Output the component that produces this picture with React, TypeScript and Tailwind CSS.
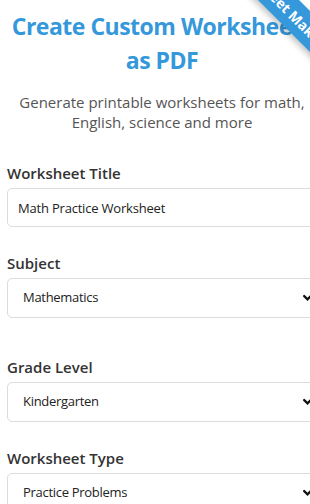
import React from "react";

const font = { fontFamily: '"Open Sans", "Noto Sans", sans-serif' };

function Chevron() {
  return (
    <svg
      className="pointer-events-none absolute left-[296px] top-1/2 -translate-y-1/2"
      width="9"
      height="7"
      viewBox="0 0 9 7"
      fill="none"
    >
      <path d="M1.2 1.6 L4.5 4.9 L7.8 1.6" stroke="#111" strokeWidth="2.2" strokeLinecap="square" />
    </svg>
  );
}

function SelectField({ value, options }: { value: string; options: string[] }) {
  return (
    <div className="relative">
      <select
        defaultValue={value}
        className="block h-[40px] w-full appearance-none rounded-[5px] border border-[#dcdcdc] bg-white pl-[15px] pr-8 text-[13px] tracking-[-0.3px] text-[#222] outline-none"
      >
        {options.map((o) => (
          <option key={o}>{o}</option>
        ))}
      </select>
      <Chevron />
    </div>
  );
}

function Label({ children }: { children: React.ReactNode }) {
  return (
    <label className="mb-[3px] block text-[15px] font-semibold leading-[24px] text-[#333]">
      {children}
    </label>
  );
}

export default function App() {
  return (
    <div className="relative min-h-screen w-full overflow-hidden bg-white" style={font}>
      <div className="w-[324px] px-[7px] pt-[9px]">
        <h1 className="whitespace-nowrap text-center text-[23px] font-bold leading-[34px] tracking-[-0.5px] text-[#3498db]">
          Create Custom Worksheets
          <br />
          as PDF
        </h1>
        <p className="mt-[15px] text-center text-[15px] leading-[20px] text-[#555]">
          Generate printable worksheets for math, English, science and more
        </p>

        <form className="mt-[29px]">
          <div>
            <Label>Worksheet Title</Label>
            <input
              type="text"
              defaultValue="Math Practice Worksheet"
              className="block h-[39px] w-full rounded-[5px] border border-[#dcdcdc] bg-white px-[10px] text-[13px] tracking-[-0.2px] text-[#222] outline-none"
            />
          </div>

          <div className="mt-[24px]">
            <Label>Subject</Label>
            <SelectField value="Mathematics" options={["Mathematics", "English", "Science"]} />
          </div>

          <div className="mt-[37px]">
            <Label>Grade Level</Label>
            <SelectField
              value="Kindergarten"
              options={["Kindergarten", "Grade 1", "Grade 2", "Grade 3"]}
            />
          </div>

          <div className="mt-[24px]">
            <Label>Worksheet Type</Label>
            <SelectField
              value="Practice Problems"
              options={["Practice Problems", "Quiz", "Word Problems"]}
            />
          </div>
        </form>
      </div>

      <div className="pointer-events-none absolute right-0 top-0 h-[120px] w-[120px] overflow-hidden">
        <div className="absolute left-[-11px] top-[-14px] flex h-[29px] w-[200px] rotate-45 items-center justify-center bg-[#3498db] text-[14px] font-bold text-white shadow-[0_3px_6px_rgba(0,0,0,0.25)]">
          Worksheet Maker
        </div>
      </div>
    </div>
  );
}
